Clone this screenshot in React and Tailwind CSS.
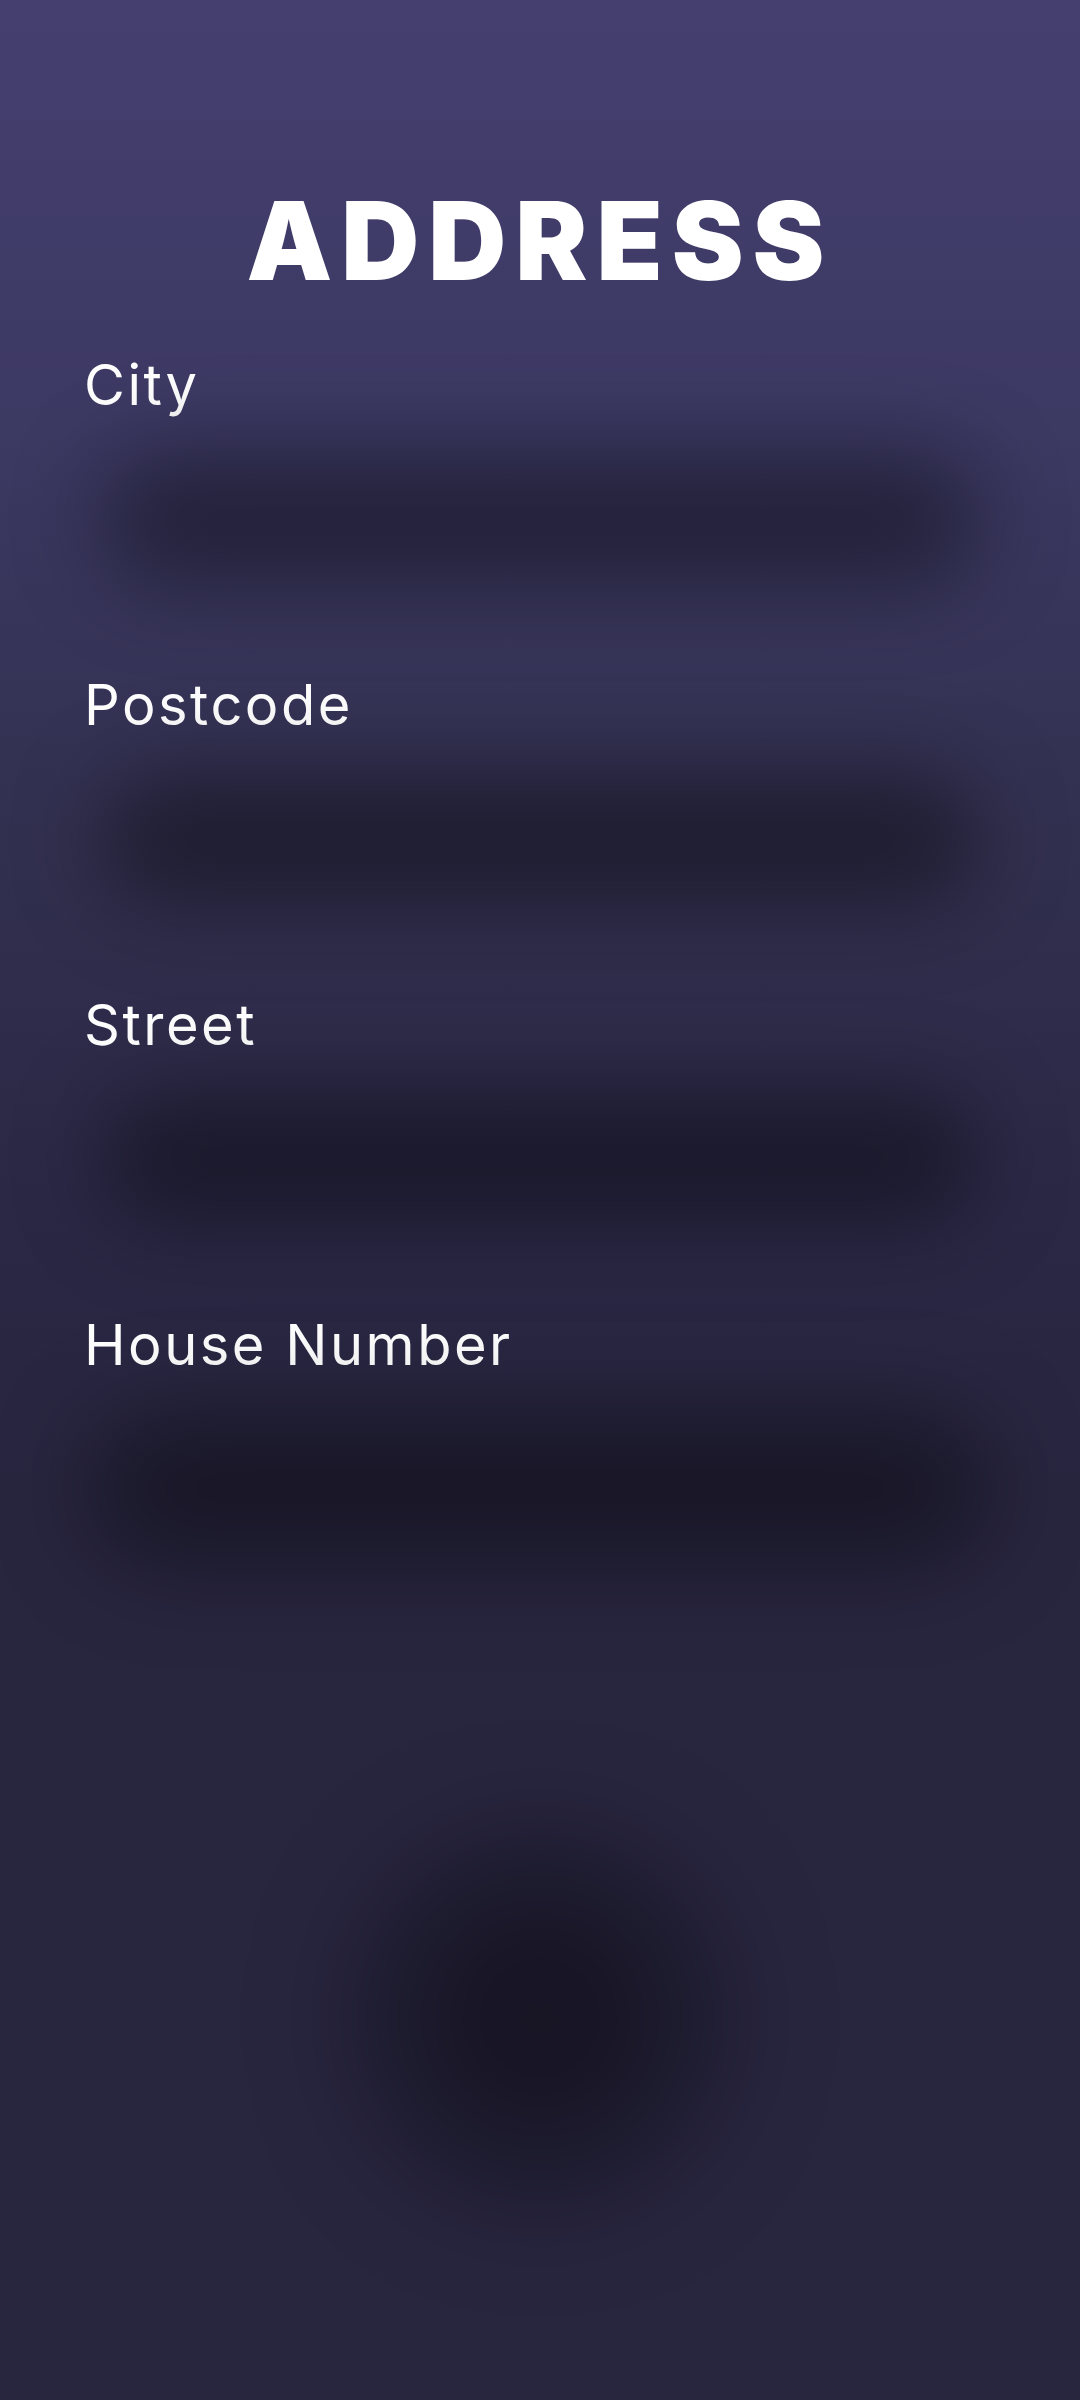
const fields = ["City", "Postcode", "Street", "House Number"];

function Field({ label, last }) {
  return (
    <div className="flex h-[320px] flex-col">
      <label className="h-[55px] pl-[84px] text-[56px] leading-[55px] font-normal tracking-[2.5px] text-white">
        {label}
      </label>
      {/* the input is only seen through its big soft shadow */}
      <div className="flex h-[210px] items-center justify-center">
        <div
          className={
            last
              ? "mt-[20px] h-[150px] w-[900px] rounded-full bg-black/40 blur-[48px]"
              : "h-[130px] w-[880px] rounded-full bg-black/40 blur-[44px]"
          }
        />
      </div>
    </div>
  );
}

export default function App() {
  return (
    <div
      className="min-h-[2400px] w-[1080px] overflow-hidden bg-[linear-gradient(180deg,#453f6f_0%,#3c3963_18%,#32304f_35%,#2b2846_50%,#28253f_62%,#28253f_100%)]"
      style={{ fontFamily: "Inter, 'Open Sans', sans-serif" }}
    >
      <h1 className="pt-[187px] text-center text-[108px] leading-[108px] font-black tracking-[9px] text-white">
        ADDRESS
      </h1>
      <div className="mt-[63px] flex flex-col">
        {fields.map((f, i) => (
          <Field key={f} label={f} last={i === fields.length - 1} />
        ))}
      </div>
      <div className="mt-[210px] flex justify-center">
        <div className="h-[340px] w-[340px] rounded-full bg-black/40 blur-[60px]" />
      </div>
    </div>
  );
}
